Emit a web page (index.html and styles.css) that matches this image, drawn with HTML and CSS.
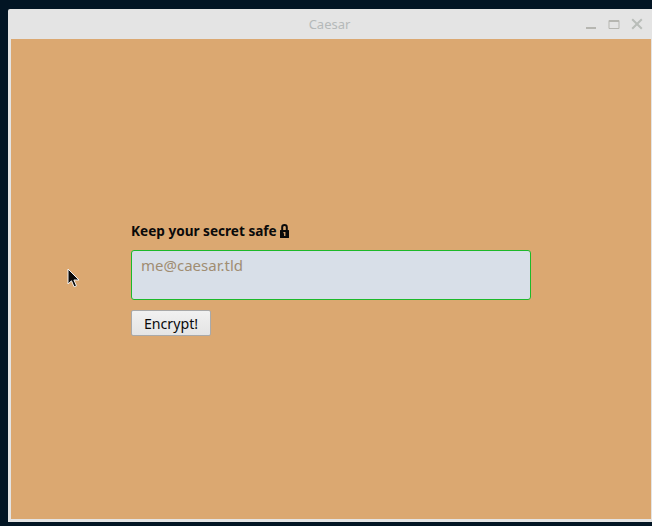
FILE: index.html
```html
<!DOCTYPE html>
<html lang="en">
<head>
<meta charset="utf-8">
<title>Caesar</title>
<link rel="stylesheet" href="styles.css">
</head>
<body>
<div class="window">
  <header class="titlebar">
    <span class="title">Caesar</span>
    <div class="controls">
      <svg class="ctl" width="12" height="12" viewBox="0 0 12 12"><rect x="1" y="9" width="10" height="2" fill="#b6b6b1"/></svg>
      <svg class="ctl" width="12" height="12" viewBox="0 0 12 12"><path d="M1 2.5h10v8H1z" fill="none" stroke="#b6b6b1" stroke-width="1"/><rect x="1" y="2" width="10" height="2" fill="#b6b6b1"/></svg>
      <svg class="ctl" width="12" height="12" viewBox="0 0 12 12"><path d="M1.2 1.2l9.6 9.6M10.8 1.2l-9.6 9.6" stroke="#b9bdb9" stroke-width="2" fill="none"/></svg>
    </div>
  </header>
  <main class="content">
    <form class="form">
      <label class="label">Keep your secret safe
        <svg class="lock" width="9" height="14" viewBox="0 0 9 14"><path fill-rule="evenodd" d="M1.2 6V3.2a3.3 3.2 0 0 1 6.6 0V6h.7a.5.5 0 0 1 .5.5v7a.5.5 0 0 1-.5.5h-8a.5.5 0 0 1-.5-.5v-7A.5.5 0 0 1 .5 6zM3.2 6h2.6V3.2a1.3 1.3 0 0 0-2.6 0zM3.4 8v1.3h.7V12h1.3V8z" fill="#0b0b0b"/></svg>
      </label>
      <div class="input">me@caesar.tld</div>
      <button class="button" type="button">Encrypt!</button>
    </form>
  </main>
</div>
<svg class="cursor" width="14" height="21" viewBox="0 0 14 21"><path d="M1 1v15l3.5-3.2 2.6 6 2.4-1-2.6-5.8H12z" fill="#0a0a0a" stroke="#f2f2f2" stroke-width="1"/></svg>
</body>
</html>
```
FILE: styles.css
```css
html, body {
  margin: 0;
  height: 100%;
}
body {
  background: #021524;
  padding: 9px 0 4px 8px;
  box-sizing: border-box;
  overflow: hidden;
  position: relative;
  font-family: "Noto Sans", "Open Sans", sans-serif;
}
.window {
  height: 513px;
  display: flex;
  flex-direction: column;
  box-sizing: border-box;
  background: #e4e4e4;
  padding: 0 1px 3px 3px;
  border-radius: 2px 0 0 0;
}
.titlebar {
  height: 30px;
  flex: none;
  position: relative;
  display: flex;
  align-items: center;
  justify-content: center;
  margin-left: -3px;
}
.title {
  font-size: 13px;
  color: #b5b9b9;
}
.controls {
  position: absolute;
  right: 8px;
  top: 9px;
  display: flex;
  gap: 11px;
}
.content {
  flex: 1;
  background: #dba871;
  display: flex;
  flex-direction: column;
  justify-content: flex-start;
  padding: 182px 0 0 120px;
}
.form {
  display: flex;
  flex-direction: column;
  align-items: flex-start;
}
.label {
  font-size: 13.6px;
  line-height: 20px;
  font-weight: 700;
  color: #0a0a0a;
  display: flex;
  align-items: center;
  gap: 3px;
}
.input {
  box-sizing: border-box;
  width: 400px;
  height: 50px;
  margin-top: 9px;
  padding: 3px 9px;
  background: #d8dfe8;
  border: 1px solid #1db92a;
  border-radius: 3px;
  font-size: 15px;
  line-height: 22px;
  color: #a08d72;
}
.button {
  box-sizing: border-box;
  width: 80px;
  height: 26px;
  margin-top: 10px;
  padding: 0;
  background: linear-gradient(#f1f1f1, #e4e4e4);
  border: 1px solid #a9a9a9;
  border-radius: 2px;
  font-family: inherit;
  font-size: 14.2px;
  color: #0a0a0a;
}
.cursor {
  position: absolute;
  left: 67px;
  top: 268px;
}
```
